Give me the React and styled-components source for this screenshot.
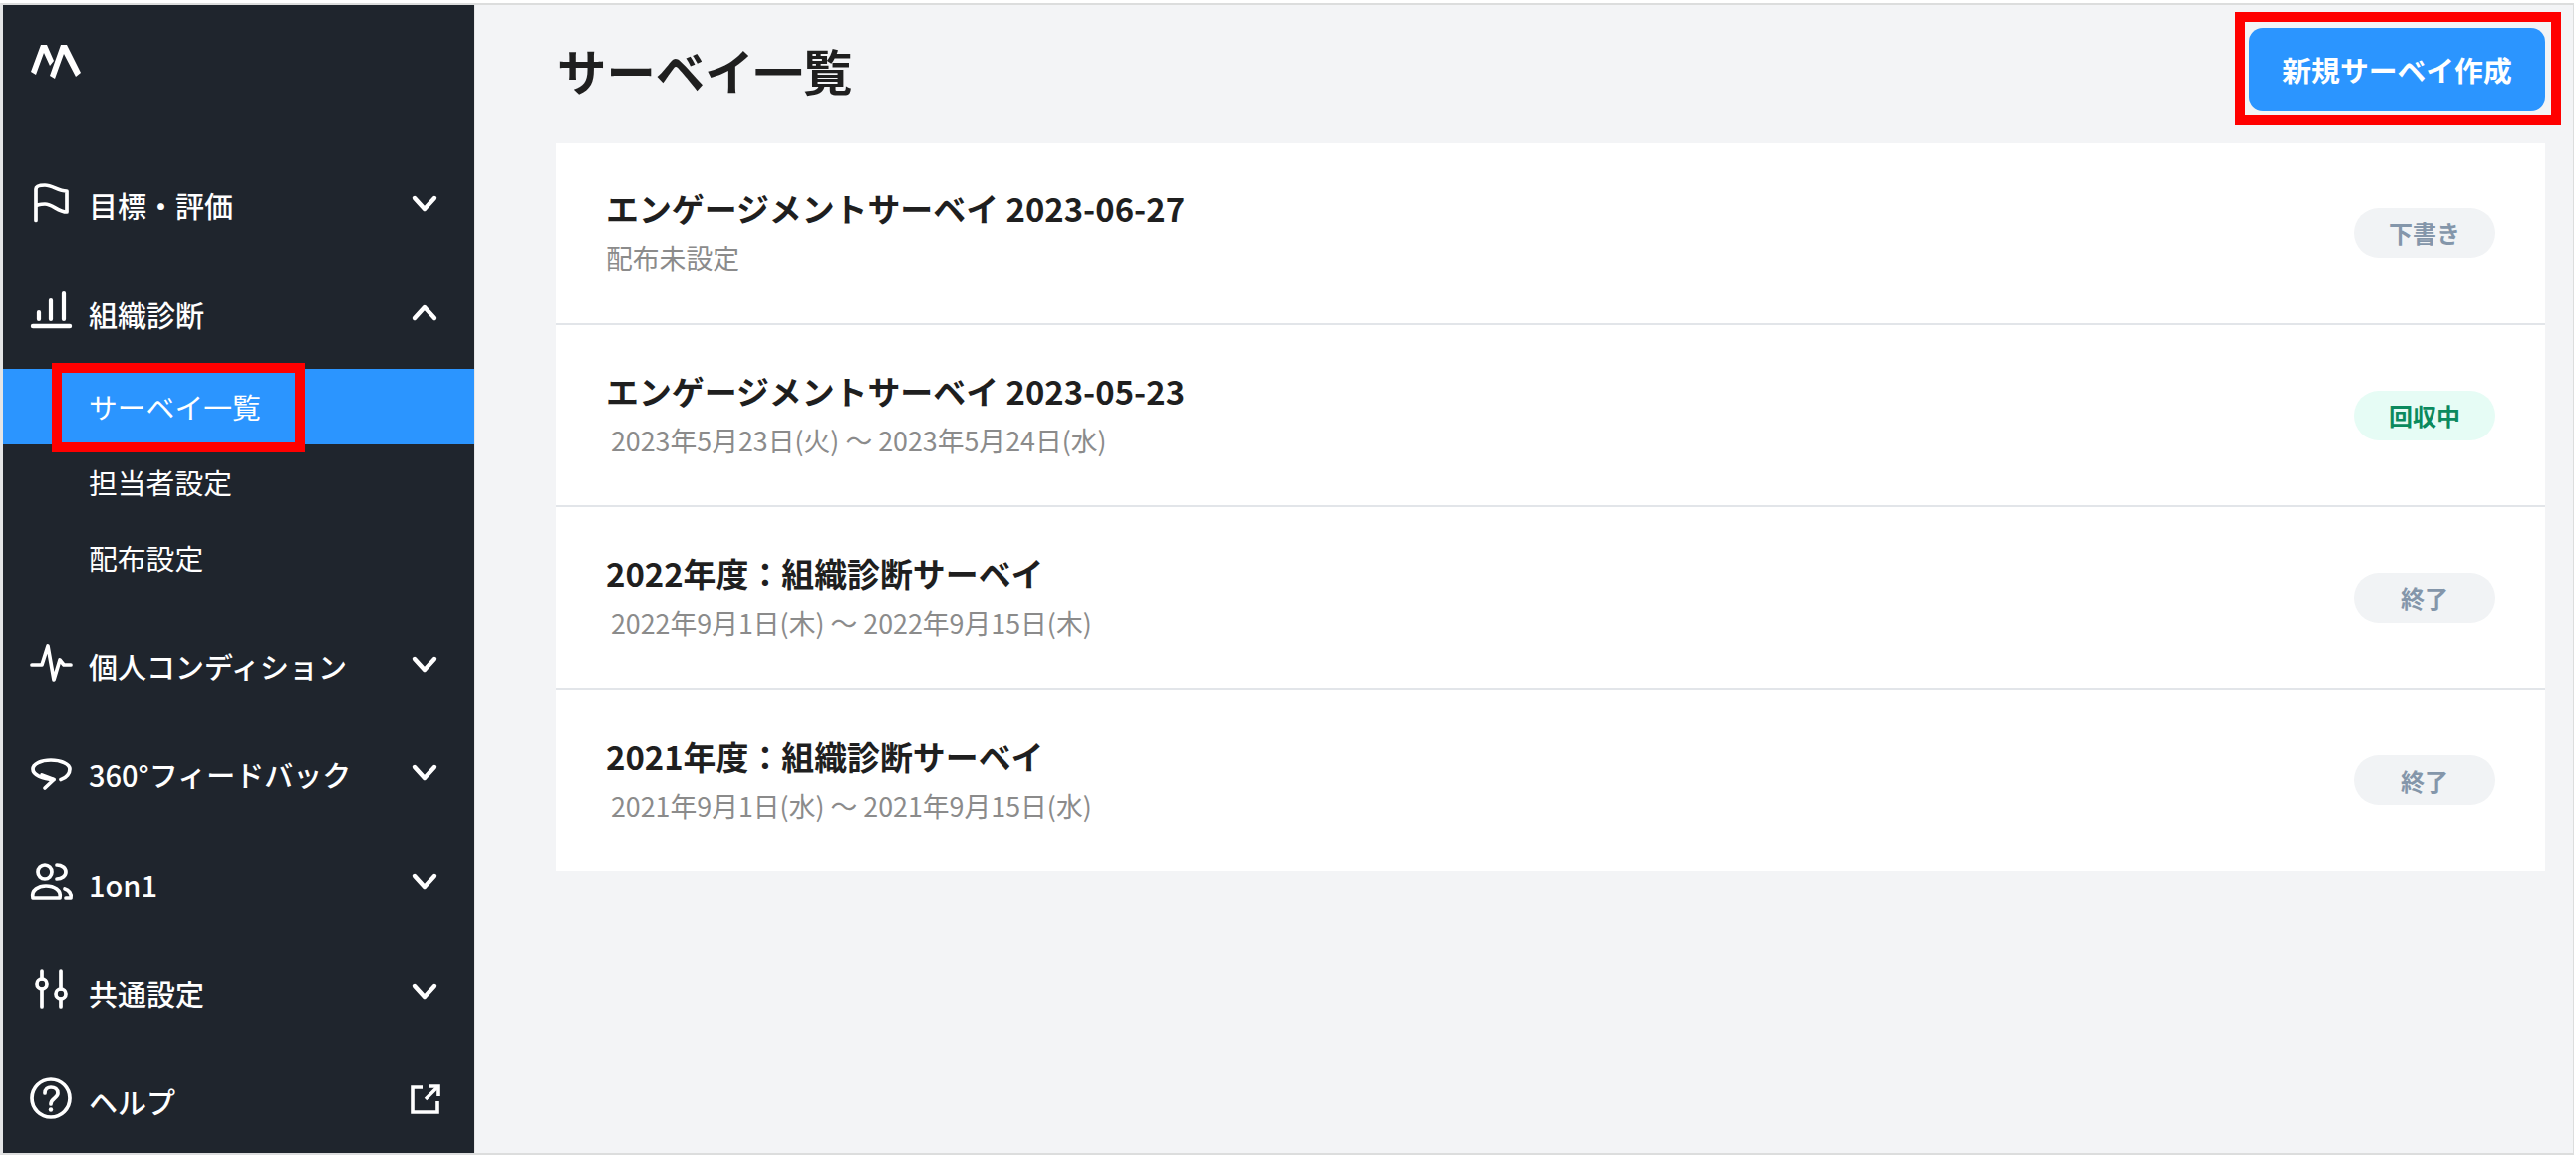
import React from "react";
import styled, { createGlobalStyle } from "styled-components";

const Global = createGlobalStyle`
  html, body { margin: 0; padding: 0; background: #fff; }
  * { box-sizing: border-box; }
  body { font-family: "Noto Sans CJK JP", "Noto Sans", sans-serif; }
`;

const Frame = styled.div`
  position: relative;
  width: 2585px;
  height: 1164px;
  padding: 3px 2px 5px 0;
  background: #fff;
`;
const Shell = styled.div`
  display: flex;
  height: 100%;
  border-top: 2px solid #dcdddd;
  border-bottom: 2px solid #dcdddd;
  border-left: 3px solid #e4e5e6;
  border-right: 1px solid #dcdddd;
`;
const Sidebar = styled.aside`
  width: 473px;
  flex: none;
  background: #1f252d;
  color: #fff;
  padding-top: 39px;
`;
const Logo = styled.svg`
  display: block;
  width: 54px;
  height: 40px;
  margin: 0 0 66px 28px;
  fill: #fff;
`;
const NavRow = styled.div`
  display: flex;
  align-items: center;
  height: 109.3px;
  padding: 0 30px 0 28px;
  margin-top: ${(p) => (p.$gap ? p.$gap : 0)}px;
`;
const NavIcon = styled.svg`
  width: 40px;
  height: 40px;
  flex: none;
  margin-right: 18px;
  margin-bottom: 3px;
  fill: none;
  stroke: #fff;
  stroke-width: 3.7;
  stroke-linecap: round;
  stroke-linejoin: round;
  overflow: visible;
`;
const NavLabel = styled.span`
  flex: 1;
  font-size: 29px;
  font-weight: 500;
  line-height: 40px;
  padding-top: 3px;
  white-space: nowrap;
`;
const TrailIcon = styled.svg`
  width: 40px;
  height: 40px;
  flex: none;
  margin-bottom: 2px;
  fill: none;
  stroke: #fff;
  stroke-width: 4.4;
  stroke-linecap: round;
  stroke-linejoin: round;
`;
const ExternalIcon = styled(TrailIcon)`
  stroke-width: 3.6;
  stroke-linecap: butt;
  stroke-linejoin: miter;
`;
const SubList = styled.div`
  margin-top: 1.4px;
`;
const SubItem = styled.div`
  height: 76px;
  display: flex;
  align-items: center;
  padding-left: 86px;
  font-size: 28.8px;
  font-weight: 400;
  background: ${(p) => (p.$active ? "#2b95ff" : "transparent")};
`;
const Main = styled.main`
  flex: 1;
  min-width: 0;
  background: #f3f4f6;
  padding: 23px 28px 0 81px;
  border-left: 1px solid #e6e7e8;
`;
const Header = styled.header`
  display: flex;
  align-items: center;
  justify-content: space-between;
  height: 83px;
  margin-bottom: 32px;
`;
const Title = styled.h1`
  margin: 0;
  font-size: 49.4px;
  font-weight: 700;
  color: #1f1f1f;
  line-height: 59px;
  padding-left: 1px;
`;
const PrimaryButton = styled.button`
  width: 297px;
  height: 83px;
  border: 0;
  border-radius: 14px;
  background: #2b95ff;
  color: #fff;
  font-family: inherit;
  font-size: 28.8px;
  font-weight: 700;
`;
const Card = styled.section`
  background: #fff;
`;
const Row = styled.div`
  display: flex;
  align-items: center;
  justify-content: space-between;
  height: ${(p) => (p.$last ? 182 : 183)}px;
  padding: 0 50px;
  border-bottom: ${(p) => (p.$last ? "0" : "2px solid #e2e5e9")};
`;
const RowText = styled.div`
  display: flex;
  flex-direction: column;
  padding-bottom: 3px;
`;
const RowTitle = styled.div`
  font-size: 32.9px;
  font-weight: 700;
  color: #1f1f1f;
  line-height: 48px;
`;
const RowSub = styled.div`
  font-size: 26.8px;
  font-weight: 400;
  color: #8b8b8b;
  line-height: 40px;
  margin-top: 6px;
  padding-left: ${(p) => (p.$indent ? 5 : 0)}px;
`;
const Pill = styled.span`
  display: flex;
  align-items: center;
  justify-content: center;
  width: 142px;
  height: 50px;
  border-radius: 25px;
  font-size: 24px;
  font-weight: 700;
  background: ${(p) => (p.$green ? "#e6fcf5" : "#f1f3f5")};
  color: ${(p) => (p.$green ? "#0b8a5e" : "#8496aa")};
`;
const Highlight = styled.div`
  position: absolute;
  border: 10px solid #ff0000;
  pointer-events: none;
  left: ${(p) => p.$x}px;
  top: ${(p) => p.$y}px;
  width: ${(p) => p.$w}px;
  height: ${(p) => p.$h}px;
`;

const Flag = () => (
  <NavIcon viewBox="0 0 40 40">
    <path d="M5 38.5V7C5 4 9 3 14 3C22 3 27 9 36 9V30C27 30 22 22 14 22C9 22 5 23 5 25" />
  </NavIcon>
);
const Bars = () => (
  <NavIcon viewBox="0 0 40 40">
    <path d="M2 35H39" strokeWidth="4.4" />
    <path d="M8 21V28M20 9V28M33 2V28" strokeWidth="4.2" />
  </NavIcon>
);
const Pulse = () => (
  <NavIcon viewBox="0 0 40 40">
    <path d="M1 22H11L17 3L23 37L29 17L33 22H40" />
  </NavIcon>
);
const Loop = () => (
  <NavIcon viewBox="0 0 40 40">
    <path d="M30 28.5C36 27 39 22 39 18C39 13 30 9 20 9C10 9 2 13 2 18C2 24 12 28 23 28.5" />
    <path d="M11 24L23 28.5L14 37" />
  </NavIcon>
);
const People = () => (
  <NavIcon viewBox="0 0 40 40">
    <circle cx="14" cy="11" r="7" />
    <path d="M2 37C0 29 8 25 15 25C23 25 31 29 29 37Z" />
    <path d="M26 4C31 4 35 7 35 11C35 15 31 18 26 18" />
    <path d="M35 37H40C41 33 38 29 34 28" />
  </NavIcon>
);
const Sliders = () => (
  <NavIcon viewBox="0 0 40 40">
    <path d="M11 1V9M11 19V37M30 1V19M30 29V37" />
    <circle cx="11" cy="14" r="5" />
    <circle cx="30" cy="24" r="5" />
  </NavIcon>
);
const Help = () => (
  <NavIcon viewBox="0 0 40 40">
    <circle cx="20" cy="20" r="19" />
    <path d="M14 15C14 11 17 9 20 9C24 9 27 11 27 15C27 20 20 20 20 26" />
    <path d="M20 31.5V31.6" strokeWidth="4.4" />
  </NavIcon>
);
const Chevron = ({ up }) => (
  <TrailIcon viewBox="0 0 40 40">
    <path d={up ? "M10 26L20 15L30 26" : "M10 15L20 26L30 15"} />
  </TrailIcon>
);
const External = () => (
  <ExternalIcon viewBox="0 0 40 40">
    <path d="M18 8H8V33H33V22" />
    <path d="M21 20L33 8" />
    <path d="M24 7H34V17" />
  </ExternalIcon>
);

const navTop = [
  { label: "目標・評価", Icon: Flag },
  { label: "組織診断", Icon: Bars, open: true },
];
const navBottom = [
  { label: "個人コンディション", Icon: Pulse },
  { label: "360°フィードバック", Icon: Loop },
  { label: "1on1", Icon: People },
  { label: "共通設定", Icon: Sliders },
];
const surveys = [
  { title: "エンゲージメントサーベイ 2023-06-27", sub: "配布未設定", status: "下書き" },
  { title: "エンゲージメントサーベイ 2023-05-23", sub: "2023年5月23日(火) ～ 2023年5月24日(水)", status: "回収中", green: true, indent: true },
  { title: "2022年度：組織診断サーベイ", sub: "2022年9月1日(木) ～ 2022年9月15日(木)", status: "終了", indent: true },
  { title: "2021年度：組織診断サーベイ", sub: "2021年9月1日(水) ～ 2021年9月15日(水)", status: "終了", indent: true },
];

export default function App() {
  return (
    <Frame>
      <Global />
      <Shell>
        <Sidebar>
          <Logo viewBox="0 0 54 40">
            <polygon points="10,1 16,1 23,17 19,22 13,9 5,31 0,28" />
            <polygon points="30,1 36,1 50,29 45,33 33,10 24,35 19,32" />
          </Logo>
          {navTop.map(({ label, Icon, open }) => (
            <NavRow key={label}>
              <Icon />
              <NavLabel>{label}</NavLabel>
              <Chevron up={open} />
            </NavRow>
          ))}
          <SubList>
            <SubItem $active>サーベイ一覧</SubItem>
            <SubItem>担当者設定</SubItem>
            <SubItem>配布設定</SubItem>
          </SubList>
          {navBottom.map(({ label, Icon }, i) => (
            <NavRow key={label} $gap={i === 0 ? 14 : 0}>
              <Icon />
              <NavLabel>{label}</NavLabel>
              <Chevron />
            </NavRow>
          ))}
          <NavRow>
            <Help />
            <NavLabel>ヘルプ</NavLabel>
            <External />
          </NavRow>
        </Sidebar>
        <Main>
          <Header>
            <Title>サーベイ一覧</Title>
            <PrimaryButton>新規サーベイ作成</PrimaryButton>
          </Header>
          <Card>
            {surveys.map((s, i) => (
              <Row key={s.title} $last={i === surveys.length - 1}>
                <RowText>
                  <RowTitle>{s.title}</RowTitle>
                  <RowSub $indent={s.indent}>{s.sub}</RowSub>
                </RowText>
                <Pill $green={s.green}>{s.status}</Pill>
              </Row>
            ))}
          </Card>
        </Main>
      </Shell>
      <Highlight $x={52} $y={364} $w={254} $h={90} />
      <Highlight $x={2243} $y={12} $w={327} $h={113} />
    </Frame>
  );
}
